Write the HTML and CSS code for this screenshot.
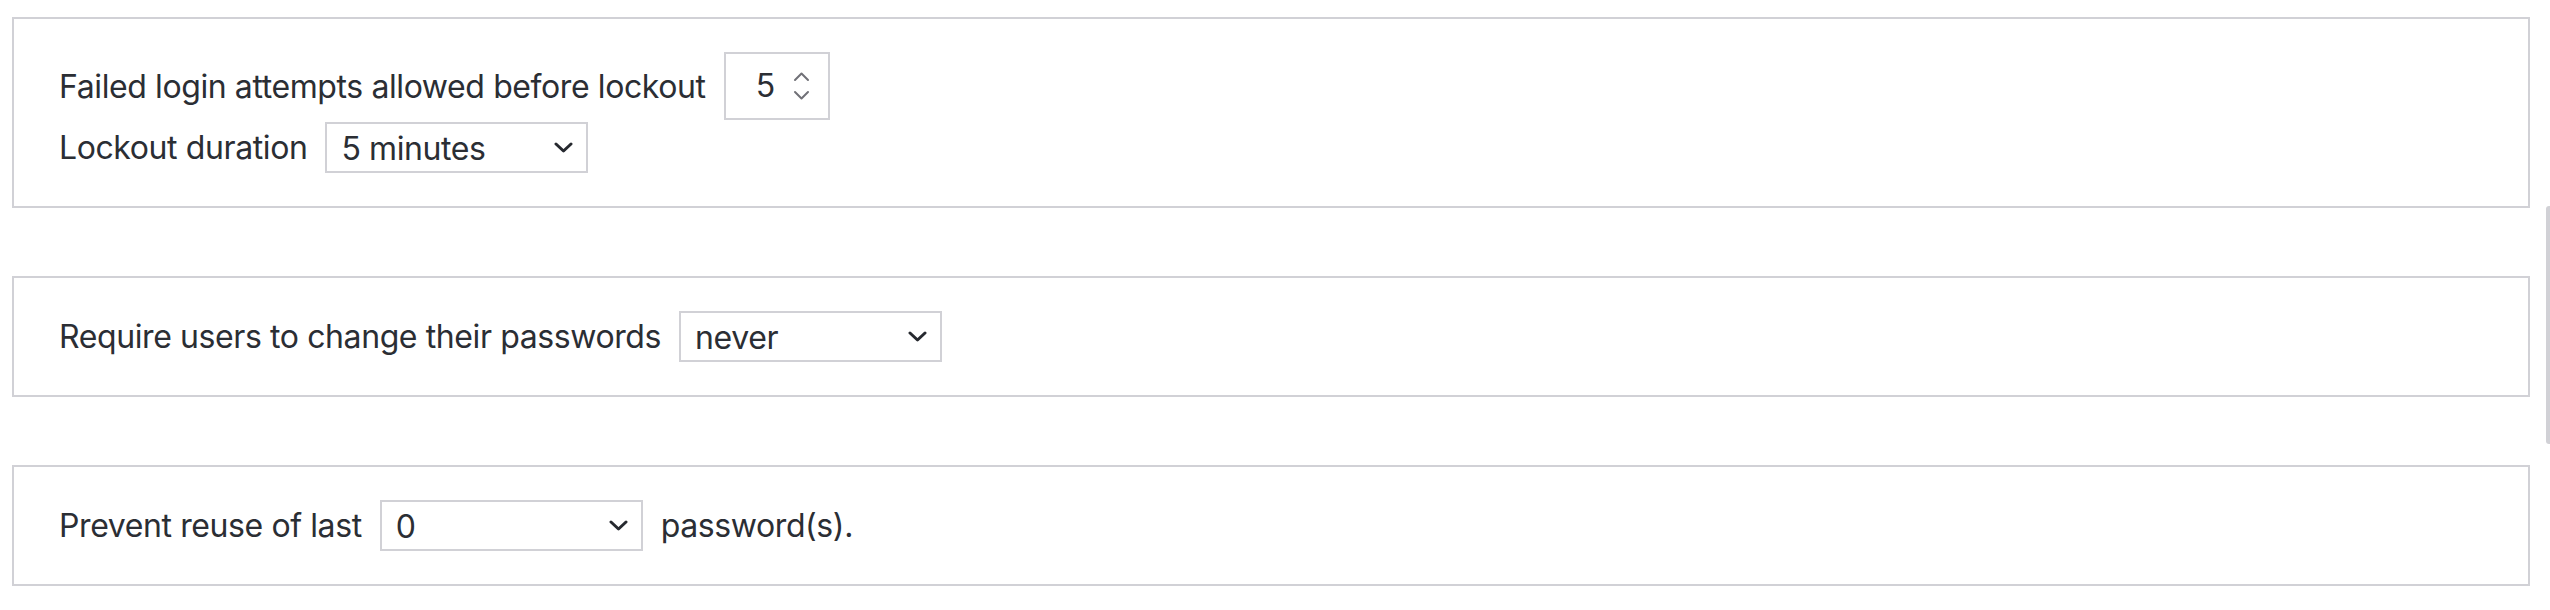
FILE: index.html
```html
<!DOCTYPE html>
<html lang="en">
<head>
<meta charset="utf-8">
<title>Password policy</title>
<link rel="stylesheet" href="styles.css">
</head>
<body>
<main class="page">
  <section class="panel">
    <div class="row row-tall">
      <label class="label">Failed login attempts allowed before lockout</label>
      <div class="spin">
        <span class="spin-value">5</span>
        <svg class="spin-arrows" width="17" height="32" viewBox="0 0 17 32" aria-hidden="true">
          <path d="M2 10 L8.5 3.5 L15 10" fill="none" stroke="#717177" stroke-width="2" stroke-linecap="round" stroke-linejoin="round"/>
          <path d="M2 22 L8.5 28.5 L15 22" fill="none" stroke="#717177" stroke-width="2" stroke-linecap="round" stroke-linejoin="round"/>
        </svg>
      </div>
    </div>
    <div class="row row-gap">
      <label class="label">Lockout duration</label>
      <div class="select">
        <span class="select-value">5 minutes</span>
        <svg class="chevron" width="19" height="11" viewBox="0 0 19 11" aria-hidden="true">
          <path d="M2 2 L9.5 9 L17 2" fill="none" stroke="#26292f" stroke-width="3" stroke-linecap="round" stroke-linejoin="round"/>
        </svg>
      </div>
    </div>
  </section>

  <section class="panel">
    <div class="row">
      <label class="label">Require users to change their passwords</label>
      <div class="select">
        <span class="select-value">never</span>
        <svg class="chevron" width="19" height="11" viewBox="0 0 19 11" aria-hidden="true">
          <path d="M2 2 L9.5 9 L17 2" fill="none" stroke="#26292f" stroke-width="3" stroke-linecap="round" stroke-linejoin="round"/>
        </svg>
      </div>
    </div>
  </section>

  <section class="panel">
    <div class="row">
      <label class="label">Prevent reuse of last</label>
      <div class="select">
        <span class="select-value">0</span>
        <svg class="chevron" width="19" height="11" viewBox="0 0 19 11" aria-hidden="true">
          <path d="M2 2 L9.5 9 L17 2" fill="none" stroke="#26292f" stroke-width="3" stroke-linecap="round" stroke-linejoin="round"/>
        </svg>
      </div>
      <span class="label">password(s).</span>
    </div>
  </section>
</main>
<div class="scrollbar"></div>
</body>
</html>
```

FILE: styles.css
```css
html, body {
  margin: 0;
  padding: 0;
  background: #ffffff;
}

body {
  font-family: Inter, "Noto Sans", "Liberation Sans", sans-serif;
  font-size: 32px;
  letter-spacing: -0.4px;
  color: #2b2e34;
  overflow: hidden;
}

.page {
  display: flex;
  flex-direction: column;
  gap: 68px;
  padding: 17px 20px 0 12px;
}

.panel {
  border: 2px solid #d1d1d6;
  padding: 33px 43px 33px 45px;
  display: flex;
  flex-direction: column;
}

.row {
  display: flex;
  align-items: center;
  gap: 18px;
  height: 51px;
}

.row-tall {
  height: 68px;
}

.row-gap {
  margin-top: 2px;
}

.label {
  line-height: 51px;
  white-space: nowrap;
}

.select {
  box-sizing: border-box;
  width: 263px;
  height: 51px;
  border: 2px solid #d1d1d6;
  display: flex;
  align-items: center;
  justify-content: space-between;
  padding: 2px 13px 0 14px;
}

.select-value {
  line-height: 47px;
}

.chevron {
  display: block;
  margin-top: -3px;
}

.spin {
  box-sizing: border-box;
  width: 106px;
  height: 68px;
  border: 2px solid #d1d1d6;
  display: flex;
  align-items: center;
  justify-content: flex-end;
  gap: 18px;
  padding: 0 18px 0 14px;
}

.spin-value {
  line-height: 64px;
}

.spin-arrows {
  display: block;
}

.scrollbar {
  position: absolute;
  top: 206px;
  right: 0;
  width: 4px;
  height: 238px;
  background: #d1d1d6;
  border-radius: 3px 0 0 3px;
}
```
